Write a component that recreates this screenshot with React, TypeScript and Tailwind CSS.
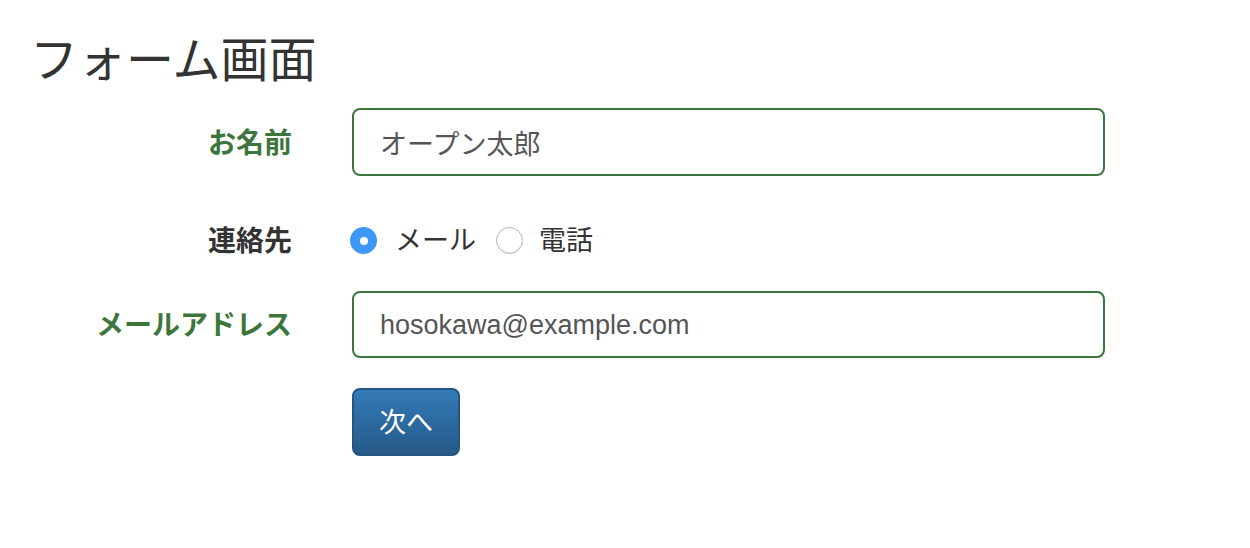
import { useState } from "react";

const font = {
  fontFamily: '"Liberation Sans", "Noto Sans CJK JP", sans-serif',
};

function Radio({ checked, onClick }: { checked: boolean; onClick: () => void }) {
  return (
    <button
      type="button"
      onClick={onClick}
      className={
        checked
          ? "flex h-[27px] w-[27px] items-center justify-center rounded-full bg-[#3d97f7]"
          : "h-[27px] w-[27px] rounded-full border border-[#b5b5b5] bg-white shadow-[inset_0_-1px_1px_rgba(0,0,0,0.08)]"
      }
    >
      {checked && <span className="h-[8px] w-[8px] rounded-full bg-white" />}
    </button>
  );
}

export default function App() {
  const [name, setName] = useState("オープン太郎");
  const [email, setEmail] = useState("hosokawa@example.com");
  const [contact, setContact] = useState<"mail" | "tel">("mail");

  return (
    <main className="min-h-screen bg-white pl-[30px] pt-[35px] text-[#333]" style={font}>
      <h1 className="text-[48px] font-normal leading-[1.1]">フォーム画面</h1>

      <form className="mt-[20px] flex flex-col">
        {/* お名前 */}
        <div className="flex items-center gap-[60px]">
          <label className="w-[262px] pt-[4px] text-right text-[28px] font-bold text-[#3c763d]">
            お名前
          </label>
          <input
            value={name}
            onChange={(e) => setName(e.target.value)}
            className="h-[68px] w-[753px] rounded-[8px] border-2 border-[#3c763d] px-[26px] pt-[2px] text-[27px] text-[#555] outline-none"
          />
        </div>

        {/* 連絡先 */}
        <div className="mt-[31px] flex h-[68px] items-center gap-[58px]">
          <label className="w-[262px] pt-[2px] text-right text-[28px] font-bold text-[#333]">
            連絡先
          </label>
          <div className="flex items-center text-[27px]">
            <Radio checked={contact === "mail"} onClick={() => setContact("mail")} />
            <span className="ml-[18px]">メール</span>
            <span className="ml-[20px] flex">
              <Radio checked={contact === "tel"} onClick={() => setContact("tel")} />
            </span>
            <span className="ml-[16px]">電話</span>
          </div>
        </div>

        {/* メールアドレス */}
        <div className="mt-[16px] flex items-center gap-[60px]">
          <label className="w-[262px] pt-[4px] text-right text-[28px] font-bold text-[#3c763d]">
            メールアドレス
          </label>
          <input
            value={email}
            onChange={(e) => setEmail(e.target.value)}
            className="h-[67px] w-[753px] rounded-[8px] border-2 border-[#3c763d] px-[26px] pt-[2px] text-[27px] text-[#555] outline-none"
          />
        </div>

        <div className="mt-[30px] pl-[322px]">
          <button
            type="button"
            className="h-[68px] w-[108px] rounded-[8px] border-2 border-[#245580] bg-gradient-to-b from-[#337ab7] to-[#265a88] pt-[3px] text-[27px] text-white"
          >
            次へ
          </button>
        </div>
      </form>
    </main>
  );
}
